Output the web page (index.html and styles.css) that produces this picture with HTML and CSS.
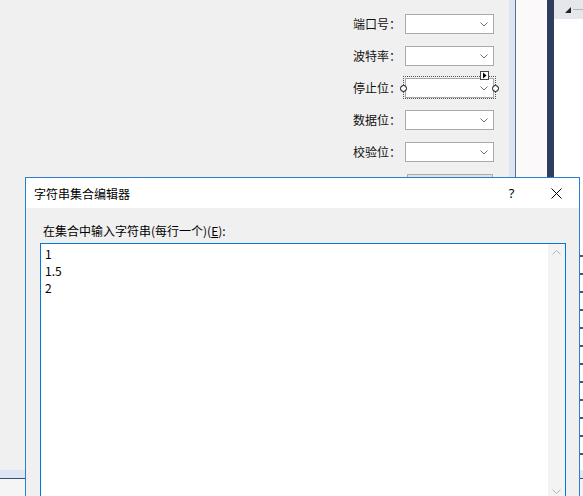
FILE: index.html
```html
<!DOCTYPE html>
<html lang="zh-CN">
<head>
  <meta charset="UTF-8"/>
  <title>字符串集合编辑器</title>
  <link rel="stylesheet" href="styles.css">
</head>
<body>

<div class="ide">
  <div class="designer">
    <div class="form-area">
      <div class="fields">
        <div class="field">
          <span class="label">端口号：</span>
          <div class="combo"><svg class="chev" width="8" height="5" viewBox="0 0 8 5"><path d="M0.5 0.5 L4 4 L7.5 0.5"/></svg></div>
        </div>
        <div class="field">
          <span class="label">波特率：</span>
          <div class="combo"><svg class="chev" width="8" height="5" viewBox="0 0 8 5"><path d="M0.5 0.5 L4 4 L7.5 0.5"/></svg></div>
        </div>
        <div class="field">
          <span class="label">停止位：</span>
          <div class="combo selected">
            <svg class="chev" width="8" height="5" viewBox="0 0 8 5"><path d="M0.5 0.5 L4 4 L7.5 0.5"/></svg>
            <span class="sel-frame"></span>
            <span class="handle left"></span>
            <span class="handle right"></span>
            <span class="smart-tag"><svg width="7" height="7" viewBox="0 0 7 7"><path d="M2 0.5 L5.5 3.5 L2 6.5 Z" fill="#000"/></svg></span>
          </div>
        </div>
        <div class="field">
          <span class="label">数据位：</span>
          <div class="combo"><svg class="chev" width="8" height="5" viewBox="0 0 8 5"><path d="M0.5 0.5 L4 4 L7.5 0.5"/></svg></div>
        </div>
        <div class="field">
          <span class="label">校验位：</span>
          <div class="combo"><svg class="chev" width="8" height="5" viewBox="0 0 8 5"><path d="M0.5 0.5 L4 4 L7.5 0.5"/></svg></div>
        </div>
        <div class="button-stub"></div>
      </div>
    </div>
    <div class="form-frame"></div>
    <div class="doc-gap"></div>
    <div class="splitter"></div>
    <div class="side-panel">
      <div class="side-head">
        <svg width="6" height="6" viewBox="0 0 6 6"><path d="M6 0 L6 6 L0 6 Z" fill="#222"/></svg>
        <span class="side-line"></span>
      </div>
      <div class="side-body"></div>
    </div>
  </div>
  <div class="hband"></div>
  <div class="lower"></div>
</div>

<!-- collection editor window -->
<div class="dialog">
  <div class="titlebar">
    <span class="title">字符串集合编辑器</span>
    <span class="title-btn help">?</span>
    <span class="title-btn close">
      <svg width="11" height="11" viewBox="0 0 11 11"><path d="M0.5 0.5 L10.5 10.5 M10.5 0.5 L0.5 10.5" stroke="#000" stroke-width="1"/></svg>
    </span>
  </div>
  <div class="dialog-body">
    <div class="prompt">在集合中输入字符串(每行一个)(<u>E</u>):</div>
    <div class="text-box">
      <div class="lines">
        <div>1</div>
        <div>1.5</div>
        <div>2</div>
      </div>
      <div class="vscroll">
        <span class="arrow"><svg width="9" height="5" viewBox="0 0 9 5"><path d="M0.5 4.5 L4.5 0.5 L8.5 4.5"/></svg></span>
        <span class="track"></span>
        <span class="arrow"><svg width="9" height="5" viewBox="0 0 9 5"><path d="M0.5 0.5 L4.5 4.5 L8.5 0.5"/></svg></span>
      </div>
    </div>
  </div>
</div>

</body>
</html>
```

FILE: styles.css
```css
body {
  margin: 0;
  width: 583px;
  height: 496px;
  overflow: hidden;
  position: relative;
  background: #f0f0f0;
  color: #000;
  font-family: "Noto Sans CJK SC", "Noto Sans", sans-serif;
  font-size: 12px;
}

/* IDE behind the dialog */
.ide {
  display: flex;
  flex-direction: column;
  height: 496px;
}

.designer {
  display: flex;
  height: 470px;
}

.form-area {
  width: 512px;
  background: #f0f0f0;
}

.fields {
  display: flex;
  flex-direction: column;
  gap: 12px;
  padding: 14px 0 0 353px;
}

.field {
  display: flex;
  align-items: center;
  height: 20px;
}

.label {
  width: 52px;
  line-height: 20px;
  color: #111;
}

.combo {
  position: relative;
  box-sizing: border-box;
  width: 89px;
  height: 20px;
  border: 1px solid #a9a9a9;
  background: #fff;
  display: flex;
  align-items: center;
  justify-content: flex-end;
  padding-right: 5px;
}

.chev path {
  fill: none;
  stroke: #6d6d6d;
  stroke-width: 1;
}

.sel-frame {
  position: absolute;
  top: -3px;
  left: -3px;
  right: -3px;
  bottom: -2px;
  border: 1px dotted #555;
}

.handle {
  position: absolute;
  top: 6px;
  box-sizing: border-box;
  width: 7px;
  height: 7px;
  border: 1px solid #000;
  border-radius: 50%;
  background: #fff;
}

.handle.left { left: -6px; }
.handle.right { right: -6px; }

.smart-tag {
  position: absolute;
  top: -8px;
  left: 74px;
  box-sizing: border-box;
  width: 9px;
  height: 9px;
  border: 1px solid #444;
  background: #fff;
  display: flex;
}

.button-stub {
  margin-left: 54px;
  width: 86px;
  height: 23px;
  box-sizing: border-box;
  border: 1px solid #adadad;
  background: #e1e1e1;
}

.form-frame {
  width: 6px;
  background: #dce6f3;
  border-right: 1px solid #5a6f8e;
}

.doc-gap {
  width: 31px;
  background: #fbf9f9;
}

.splitter {
  width: 7px;
  background: #2f3d5f;
}

.side-panel {
  flex: 1;
  background: #fff;
}

.side-head {
  height: 19px;
  background: #e6e7ec;
  display: flex;
  align-items: center;
  gap: 2px;
  padding-left: 11px;
}

.side-line {
  width: 10px;
  height: 1px;
  background: #9cc79a;
}

.side-body {
  margin: 220px 0 0 23px;
  height: 240px;
  border-left: 1px solid #7d98c4;
  background: repeating-linear-gradient(#fff 0, #fff 16px, #3d5688 16px, #3d5688 18px);
}

.hband {
  height: 8px;
  background: #dde6f2;
  border-bottom: 1px solid #3b506f;
}

.lower {
  flex: 1;
  background: #f5f5f5;
}

/* collection editor */
.dialog {
  position: absolute;
  left: 25px;
  top: 177px;
  width: 553px;
  height: 340px;
  border: 1px solid #2a7fd1;
  background: #f0f0f0;
}

.titlebar {
  display: flex;
  align-items: center;
  height: 30px;
  background: #fff;
}

.title {
  flex: 1;
  padding-left: 8px;
}

.title-btn {
  width: 45px;
  height: 30px;
  display: flex;
  align-items: center;
  justify-content: center;
}

.help {
  font-family: "Noto Sans", sans-serif;
  font-size: 13px;
}

.dialog-body {
  padding: 14px 13px 0 14px;
}

.prompt {
  line-height: 17px;
  padding-left: 3px;
  margin-bottom: 4px;
}

.text-box {
  display: flex;
  height: 256px;
  border: 1px solid #0078d7;
  background: #fff;
}

.lines {
  flex: 1;
  padding: 1px 4px;
  line-height: 17px;
}

.vscroll {
  width: 17px;
  background: #f3f3f3;
  display: flex;
  flex-direction: column;
}

.arrow {
  height: 17px;
  display: flex;
  align-items: center;
  justify-content: center;
}

.arrow path {
  fill: none;
  stroke: #b4b4b4;
  stroke-width: 1;
}

.track {
  flex: 1;
}
```
